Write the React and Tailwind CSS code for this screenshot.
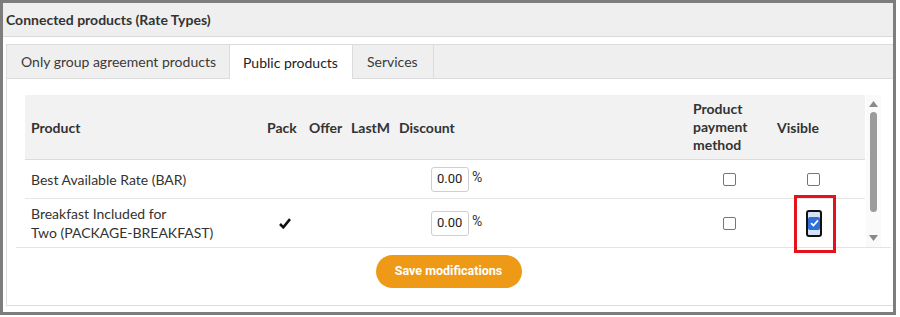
import React from "react";

const Box = ({ checked }) =>
  checked ? (
    <span className="flex h-[13px] w-[13px] items-center justify-center rounded-[2px] bg-[#2f6fd8]">
      <svg width="9" height="8" viewBox="0 0 9 8">
        <path d="M1 4.2 3.4 6.5 8 1.3" fill="none" stroke="white" strokeWidth="1.8" />
      </svg>
    </span>
  ) : (
    <span className="block h-[13px] w-[13px] rounded-[2px] border border-[#767676] bg-white" />
  );

const Discount = () => (
  <div className="flex items-center pl-[38px]">
    <div className="flex h-[25px] w-[38px] items-center rounded-[3px] border border-[#cfcfcf] bg-white pl-[5px] font-['Roboto',sans-serif] text-[13px] text-[#222]">
      0.00
    </div>
    <span className="ml-[3px] -mt-[3px] font-['Roboto',sans-serif] text-[14px] text-[#333]">%</span>
  </div>
);

const cols = "grid grid-cols-[236px_42px_42px_48px_294px_84px_94px]";

export default function App() {
  return (
    <div className="h-[315px] w-[896px] border-[3px] border-[#7d7d7d] bg-white font-['Lato',sans-serif] text-[#333]">
      {/* Section title */}
      <div className="flex h-[34px] items-center border-b border-[#d9d9d9] bg-[#efefef] pl-[3px] text-[14px] font-bold text-[#333]">
        Connected products (Rate Types)
      </div>

      <div className="ml-[3px] mt-[7px] border-b border-l border-[#dedede]">
        {/* Tabs */}
        <div className="flex h-[35px] border-y border-[#dcdcdc] bg-[#efefef] text-[14px]">
          <div className="flex w-[222px] items-center pl-[14px] text-[#3a3a3a]">Only group agreement products</div>
          <div className="-mb-px flex w-[124px] items-center border-x border-[#dcdcdc] bg-white pl-[13px] text-[#222]">
            Public products
          </div>
          <div className="flex w-[81px] items-center border-r border-[#dcdcdc] pl-[14px] text-[#3a3a3a]">Services</div>
        </div>

        <div className="pb-[17px] pt-[16px]">
          {/* Scrolling table */}
          <div className="ml-[9px] mr-[2px] flex border-b border-[#e3e3e3] pl-[9px]">
            <div className="w-[840px] text-[14px]">
              <div className={`${cols} h-[65px] items-center border-b border-[#dcdcdc] bg-[#f2f2f2] font-bold text-[#333]`}>
                <div className="pl-[6px]">Product</div>
                <div className="pl-[6px]">Pack</div>
                <div className="pl-[6px]">Offer</div>
                <div className="pl-[6px]">LastM</div>
                <div className="pl-[6px]">Discount</div>
                <div className="pl-[6px] leading-[18px]">
                  Product
                  <br />
                  payment
                  <br />
                  method
                </div>
                <div className="pl-[6px]">Visible</div>
              </div>

              <div className={`${cols} h-[39px] items-center border-b border-[#e6e6e6]`}>
                <div className="pl-[6px]">Best Available Rate (BAR)</div>
                <div />
                <div />
                <div />
                <Discount />
                <div className="flex justify-center pl-[1px]">
                  <Box />
                </div>
                <div className="pl-[36px]">
                  <Box />
                </div>
              </div>

              <div className={`${cols} h-[48px] items-center`}>
                <div className="pl-[6px] leading-[19px]">
                  Breakfast Included for
                  <br />
                  Two (PACKAGE-BREAKFAST)
                </div>
                <div className="flex justify-center pl-[6px]">
                  <svg width="12" height="11" viewBox="0 0 12 11">
                    <path d="M1 6 4.3 9.3 11 1.2" fill="none" stroke="#111" strokeWidth="2.6" />
                  </svg>
                </div>
                <div />
                <div />
                <Discount />
                <div className="flex justify-center pl-[1px]">
                  <Box />
                </div>
                <div className="relative pl-[35px]">
                  <div className="flex h-[27px] w-[16px] items-center justify-center rounded-[3px] border-2 border-[#111] bg-[#d4e3f8]">
                    <Box checked />
                  </div>
                  <div className="absolute left-[23px] top-[-15px] h-[58px] w-[42px] border-[3px] border-[#e3121c]" />
                </div>
              </div>
            </div>

            {/* Scrollbar */}
            <div className="ml-px flex w-[15px] flex-col items-center bg-[#fafafa] py-[6px]">
              <svg width="9" height="6" viewBox="0 0 9 6">
                <path d="M4.5 0 9 6H0Z" fill="#8a8a8a" />
              </svg>
              <div className="mt-[5px] h-[100px] w-[7px] rounded-full bg-[#9b9b9b]" />
              <div className="flex-1" />
              <svg width="9" height="6" viewBox="0 0 9 6">
                <path d="M0 0h9L4.5 6Z" fill="#8a8a8a" />
              </svg>
            </div>
          </div>

          <div className="mt-[7px] flex justify-center pr-[3px]">
            <button className="h-[33px] w-[146px] rounded-full bg-[#ee9a16] font-['Roboto',sans-serif] text-[12.5px] font-bold text-white">
              Save modifications
            </button>
          </div>
        </div>
      </div>
    </div>
  );
}
